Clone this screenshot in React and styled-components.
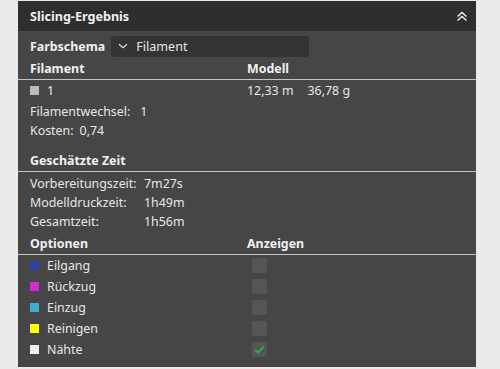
import styled, { createGlobalStyle } from "styled-components";

const GlobalStyle = createGlobalStyle`
  html, body {
    margin: 0;
    padding: 0;
    background: #ebebeb;
    font-family: "Noto Sans", "DejaVu Sans", sans-serif;
  }
`;

const Page = styled.div`
  width: 500px;
  height: 369px;
  padding: 1px 0 0 18px;
  box-sizing: border-box;
`;

const Panel = styled.div`
  width: 458px;
  height: 366px;
  background: #464646;
  color: #e6e6e6;
  font-size: 12.4px;
`;

const Header = styled.div`
  height: 30px;
  background: #2e2e2e;
  display: flex;
  align-items: center;
  justify-content: space-between;
  padding: 0 8px 0 12px;
  font-weight: 700;
  font-size: 12.6px;
  color: #f0f0f0;
`;

const SchemeRow = styled.div`
  display: flex;
  align-items: center;
  gap: 6px;
  padding: 4px 12px 0;
  height: 22px;
`;

const Bold = styled.span`
  font-weight: 700;
  color: #f0f0f0;
`;

const Select = styled.div`
  width: 198px;
  height: 21px;
  background: #343434;
  border-radius: 3px;
  display: flex;
  align-items: center;
  gap: 8px;
  padding-left: 7px;
  box-sizing: border-box;
  font-size: 12.6px;
`;

const SectionHead = styled.div`
  display: grid;
  grid-template-columns: 217px 1fr;
  padding: 0 12px;
  height: 22px;
  align-items: center;
  margin-top: ${(p) => p.$top || 0}px;
  margin-bottom: ${(p) => p.$bottom || 0}px;
  border-bottom: 1px solid #c4c4c4;
`;

const Row = styled.div`
  display: grid;
  grid-template-columns: ${(p) => p.$cols || "217px 1fr"};
  padding: 0 12px;
  height: ${(p) => p.$h || 20}px;
  align-items: center;
`;

const Pair = styled.div`
  display: flex;
  padding: 0 12px;
  height: ${(p) => p.$h || 20}px;
  align-items: center;
  gap: ${(p) => p.$gap || 8}px;
`;

const Label = styled.div`
  display: flex;
  align-items: center;
  gap: 8px;
`;

const Swatch = styled.span`
  width: 9px;
  height: 9px;
  background: ${(p) => p.$color};
  display: inline-block;
`;

const Values = styled.div`
  display: flex;
  gap: 14px;
`;

const Check = styled.span`
  width: 15px;
  height: 15px;
  margin-left: 5px;
  background: #555555;
  border-radius: 2px;
  display: flex;
  align-items: center;
  justify-content: center;
`;

const Body = styled.div`
  display: flex;
  flex-direction: column;
`;

const ChevronsUp = () => (
  <svg width="12" height="11" viewBox="0 0 12 11">
    <path d="M1.5 5.5 6 1.5l4.5 4M1.5 9.5 6 5.5l4.5 4" fill="none" stroke="#f0f0f0" strokeWidth="1.4" />
  </svg>
);

const ChevronDown = () => (
  <svg width="10" height="6" viewBox="0 0 10 6">
    <path d="M1 1.2 5 4.6 9 1.2" fill="none" stroke="#e4e4e4" strokeWidth="1.2" />
  </svg>
);

const Tick = () => (
  <svg width="11" height="9" viewBox="0 0 11 9">
    <path d="M1 5 4 7.5 10 1.5" fill="none" stroke="#22b24c" strokeWidth="2" />
  </svg>
);

const options = [
  { name: "Eilgang", color: "#2d3fa8", on: false },
  { name: "Rückzug", color: "#d42ad4", on: false },
  { name: "Einzug", color: "#3aaed0", on: false },
  { name: "Reinigen", color: "#ffff00", on: false },
  { name: "Nähte", color: "#eeeeee", on: true },
];

const times = [
  ["Vorbereitungszeit:", "7m27s"],
  ["Modelldruckzeit:", "1h49m"],
  ["Gesamtzeit:", "1h56m"],
];

export default function App() {
  return (
    <>
      <GlobalStyle />
      <Page>
        <Panel>
          <Header>
            <span>Slicing-Ergebnis</span>
            <ChevronsUp />
          </Header>
          <Body>
            <SchemeRow>
              <Bold>Farbschema</Bold>
              <Select>
                <ChevronDown />
                <span>Filament</span>
              </Select>
            </SchemeRow>
            <SectionHead>
              <Bold>Filament</Bold>
              <Bold>Modell</Bold>
            </SectionHead>
            <Row $h={21}>
              <Label>
                <Swatch $color="#bcbcbc" />
                <span>1</span>
              </Label>
              <Values>
                <span>12,33 m</span>
                <span>36,78 g</span>
              </Values>
            </Row>
            <Pair $h={20} $gap={10}>
              <span>Filamentwechsel:</span>
              <span>1</span>
            </Pair>
            <Pair $h={19} $gap={6}>
              <span>Kosten:</span>
              <span>0,74</span>
            </Pair>
            <SectionHead $top={9} $bottom={2}>
              <Bold>Geschätzte Zeit</Bold>
              <span />
            </SectionHead>
            {times.map(([k, v]) => (
              <Row key={k} $cols="114px 1fr" $h={19}>
                <span>{k}</span>
                <span>{v}</span>
              </Row>
            ))}
            <SectionHead $top={1}>
              <Bold>Optionen</Bold>
              <Bold>Anzeigen</Bold>
            </SectionHead>
            {options.map((o) => (
              <Row key={o.name} $h={21}>
                <Label>
                  <Swatch $color={o.color} />
                  <span>{o.name}</span>
                </Label>
                <Check>{o.on && <Tick />}</Check>
              </Row>
            ))}
          </Body>
        </Panel>
      </Page>
    </>
  );
}
